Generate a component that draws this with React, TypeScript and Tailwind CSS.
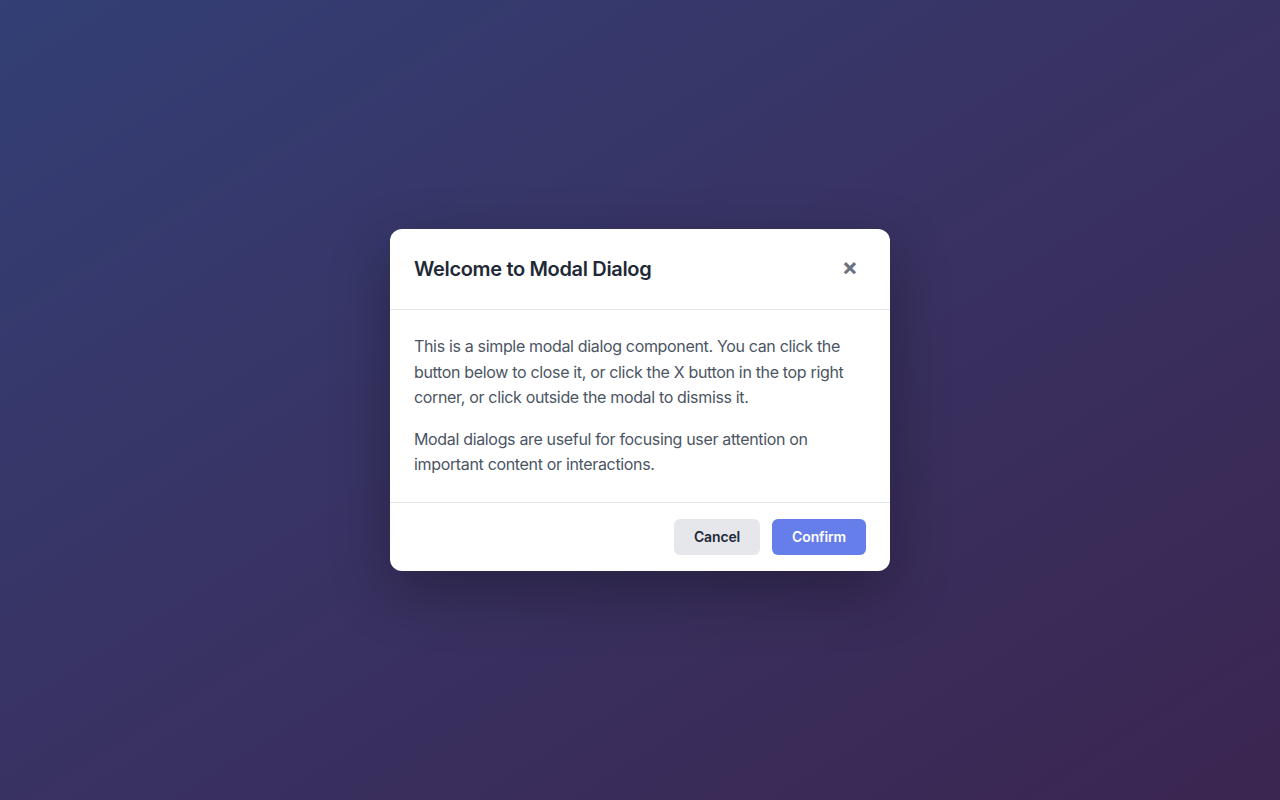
export default function App() {
  return (
    <div className="relative h-[800px] w-full overflow-hidden bg-gradient-to-br from-[#667eea] to-[#764ba2] font-['Inter',sans-serif]">
      <div className="flex h-full w-full items-center justify-center bg-black/50">
        <div className="w-[500px] rounded-xl bg-white shadow-[0_20px_60px_rgba(0,0,0,0.3)]">
          <div className="flex items-center justify-between border-b border-[#e5e7eb] p-6">
            <h2 className="text-xl font-semibold leading-[30px] tracking-[-0.017em] text-[#1f2937]">
              Welcome to Modal Dialog
            </h2>
            <button className="flex h-8 w-8 items-center justify-center rounded-md pb-1 text-2xl font-bold leading-none text-[#6b7280]">
              ×
            </button>
          </div>
          <div className="p-6 text-base leading-[1.6] tracking-[-0.021em] text-[#4b5563]">
            <p className="mb-4">
              This is a simple modal dialog component. You can click the button below to close it, or click the X
              button in the top right corner, or click outside the modal to dismiss it.
            </p>
            <p>Modal dialogs are useful for focusing user attention on important content or interactions.</p>
          </div>
          <div className="flex justify-end gap-3 border-t border-[#e5e7eb] px-6 py-4">
            <button className="h-9 rounded-md bg-[#e5e7eb] px-5 text-sm font-semibold tracking-[-0.01em] text-[#1f2937]">
              Cancel
            </button>
            <button className="h-9 rounded-md bg-[#667eea] px-5 text-sm font-semibold tracking-[-0.01em] text-white">
              Confirm
            </button>
          </div>
        </div>
      </div>
    </div>
  );
}
